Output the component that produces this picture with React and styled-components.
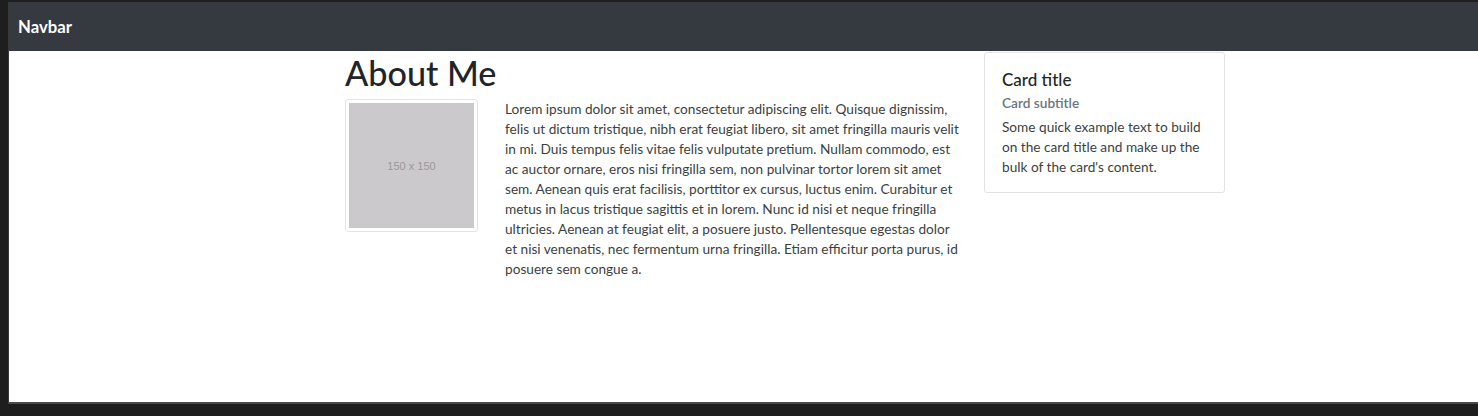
import React from 'react';
import styled, { createGlobalStyle } from 'styled-components';

const GlobalStyle = createGlobalStyle`
  html, body {
    margin: 0;
    padding: 0;
    background: #1e1e1e;
  }
  body {
    font-family: Lato, "Liberation Sans", sans-serif;
  }
`;

const Frame = styled.div`
  width: 1478px;
  height: 416px;
  box-sizing: border-box;
  padding: 2px 0 0 8px;
  background: #1e1e1e;
`;

const Page = styled.div`
  height: 400px;
  background: #fff;
  border-left: 1px solid #3a3a3a;
  border-bottom: 2px solid #4a4a4a;
  display: flex;
  flex-direction: column;
`;

const NavBar = styled.nav`
  height: 49px;
  flex-shrink: 0;
  background: #343a40;
  display: flex;
  align-items: center;
  padding-left: 9px;
`;

const Brand = styled.a`
  color: #fff;
  font-size: 16.7px;
  font-weight: 700;
  text-decoration: none;
`;

const Container = styled.div`
  margin-left: 336px;
  display: grid;
  grid-template-columns: 615px 241px;
  column-gap: 24px;
  align-items: start;
`;

const Heading = styled.h1`
  margin: 2px 0 6px;
  font-size: 34.2px;
  font-weight: 500;
  line-height: 40px;
  color: #212529;
`;

const Media = styled.div`
  display: flex;
  align-items: flex-start;
`;

const Thumbnail = styled.div`
  width: 125px;
  height: 125px;
  padding: 3px;
  border: 1px solid #e2e4e6;
  border-radius: 3px;
  margin-right: 27px;
  flex-shrink: 0;
`;

const Placeholder = styled.div`
  width: 100%;
  height: 100%;
  background: #cbc9cc;
  display: flex;
  align-items: center;
  justify-content: center;
  color: #9a989b;
  font-family: "Liberation Sans", Arial, sans-serif;
  font-size: 11px;
`;

const Body = styled.p`
  margin: 0;
  width: 456px;
  font-size: 13.65px;
  line-height: 20px;
  color: #3c3f42;
`;

const Card = styled.div`
  border: 1px solid #e3e3e3;
  border-radius: 3px;
  padding: 17px 17px 15px;
  margin-top: 1px;
`;

const CardTitle = styled.h5`
  margin: 0 0 3px;
  font-size: 17px;
  font-weight: 500;
  line-height: 20px;
  color: #212529;
`;

const CardSubtitle = styled.h6`
  margin: 0 0 4px;
  font-size: 13.65px;
  font-weight: 600;
  line-height: 20px;
  color: #6c757d;
`;

const CardText = styled.p`
  margin: 0;
  font-size: 13.65px;
  line-height: 20px;
  color: #3c3f42;
`;

const lorem =
  'Lorem ipsum dolor sit amet, consectetur adipiscing elit. Quisque dignissim, felis ut dictum tristique, nibh erat feugiat libero, sit amet fringilla mauris velit in mi. Duis tempus felis vitae felis vulputate pretium. Nullam commodo, est ac auctor ornare, eros nisi fringilla sem, non pulvinar tortor lorem sit amet sem. Aenean quis erat facilisis, porttitor ex cursus, luctus enim. Curabitur et metus in lacus tristique sagittis et in lorem. Nunc id nisi et neque fringilla ultricies. Aenean at feugiat elit, a posuere justo. Pellentesque egestas dolor et nisi venenatis, nec fermentum urna fringilla. Etiam efficitur porta purus, id posuere sem congue a.';

const App = () => {
  return (
    <Frame>
      <GlobalStyle />
      <Page>
        <NavBar>
          <Brand href="#">Navbar</Brand>
        </NavBar>
        <Container>
          <div>
            <Heading>About Me</Heading>
            <Media>
              <Thumbnail>
                <Placeholder>150 x 150</Placeholder>
              </Thumbnail>
              <Body>{lorem}</Body>
            </Media>
          </div>
          <Card>
            <CardTitle>Card title</CardTitle>
            <CardSubtitle>Card subtitle</CardSubtitle>
            <CardText>
              Some quick example text to build on the card title and make up the
              bulk of the card's content.
            </CardText>
          </Card>
        </Container>
      </Page>
    </Frame>
  );
};

export default App;
